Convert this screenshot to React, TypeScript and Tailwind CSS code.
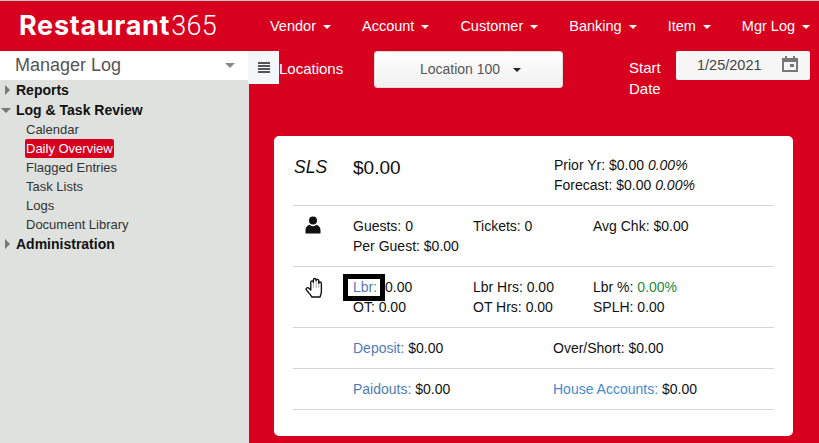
import React from "react";

const navItems = ["Vendor", "Account", "Customer", "Banking", "Item", "Mgr Log"];
const subItems = ["Calendar", "Daily Overview", "Flagged Entries", "Task Lists", "Logs", "Document Library"];

function Caret() {
  return <span className="ml-[7px] inline-block h-0 w-0 border-x-[4px] border-t-[4px] border-x-transparent border-t-white align-middle" />;
}

function TreeHead({ label, open }: { label: string; open?: boolean }) {
  return (
    <div className="flex h-[20px] items-center">
      <span className="flex w-[16px] shrink-0 justify-start pl-[2px]">
        {open ? (
          <span className="-ml-[1px] mt-[1px] h-0 w-0 border-x-[5px] border-t-[5px] border-x-transparent border-t-[#777]" />
        ) : (
          <span className="ml-[3px] h-0 w-0 border-y-[5px] border-l-[5px] border-y-transparent border-l-[#777]" />
        )}
      </span>
      <span className="text-[14px] font-bold text-[#111]">{label}</span>
    </div>
  );
}

function Sidebar() {
  return (
    <aside className="flex w-[249px] shrink-0 flex-col bg-[#dfe1de]">
      <div className="flex h-[29px] items-center justify-between bg-white pl-[15px] pr-[14px]">
        <span className="text-[18px] text-[#555]">Manager Log</span>
        <span className="h-0 w-0 border-x-[5px] border-t-[5px] border-x-transparent border-t-[#888]" />
      </div>
      <div>
        <TreeHead label="Reports" />
        <TreeHead label="Log & Task Review" open />
        <ul className="pl-[26px] text-[13px] leading-[19px] text-[#333]">
          {subItems.map((item) =>
            item === "Daily Overview" ? (
              <li key={item}>
                <span className="-ml-[1px] inline-block h-[19px] rounded-[2px] bg-[#d7001f] px-[1px] text-white">{item}</span>
              </li>
            ) : (
              <li key={item}>{item}</li>
            )
          )}
        </ul>
        <TreeHead label="Administration" />
      </div>
    </aside>
  );
}

function PersonIcon() {
  return (
    <svg width="16" height="18" viewBox="0 0 16 18" fill="#111">
      <circle cx="8" cy="4.5" r="4" />
      <path d="M0.500 17.500v-3.500c0-3 2.500-5 4.500-5 1 .8 2 1.200 3 1.200s2-.4 3-1.200c2 0 4.500 2 4.500 5v3.500z" />
    </svg>
  );
}

function HandIcon() {
  return (
    <svg width="21" height="21" viewBox="0 0 20 20" fill="none" strokeLinejoin="round" strokeLinecap="round">
      <path d="M8 4.500V10M10.600 3.500V10M13.100 4V10" stroke="#aaa" strokeWidth="0.900" />
      <path
        d="M6.500 19c-.6-1.600-1.800-2.700-3-4L1.500 12.500c-1.200-1.500.8-3.200 2.200-1.800L5.500 12.500V5c0-1.700 2.500-1.700 2.500 0V2.800c0-1.800 2.600-1.800 2.600 0v.7c0-1.700 2.500-1.700 2.500 0V6c0-1.600 2.500-1.600 2.500 0v8c0 2-.8 3.200-1.300 5z"
        stroke="#111"
        strokeWidth="1.300"
      />
    </svg>
  );
}

function Row({ icon, height, children }: { icon?: React.ReactNode; height: number; children: React.ReactNode }) {
  return (
    <div className="flex border-b border-[#d4d4d4]" style={{ height }}>
      <div className="flex w-[60px] shrink-0 justify-center pr-[16px] pt-[10px]">{icon}</div>
      <div className="min-w-0 flex-1 pt-[10px] leading-[20px]">{children}</div>
    </div>
  );
}

function Link({ children }: { children: React.ReactNode }) {
  return <span className="text-[#4f7cb8]">{children}</span>;
}

function Card() {
  return (
    <div className="relative ml-[25px] mt-[37px] h-[300px] w-[519px] rounded-[5px] bg-white px-[19px] pt-[1px] text-[14px] text-[#111]">
      <div className="flex h-[69px] border-b border-[#d4d4d4]">
        <div className="w-[60px] shrink-0 pl-[1px] pt-[19px] text-[17.5px] italic leading-[22px]">SLS</div>
        <div className="w-[201px] shrink-0 pt-[18px] text-[19px] leading-[26px]">$0.00</div>
        <div className="pt-[18px] leading-[20px]">
          <div>
            Prior Yr: $0.00 <i>0.00%</i>
          </div>
          <div>
            Forecast: $0.00 <i>0.00%</i>
          </div>
        </div>
      </div>

      <Row icon={<div className="pr-[4px]"><PersonIcon /></div>} height={61}>
        <div className="grid grid-cols-[120px_120px_1fr]">
          <div>Guests: 0</div>
          <div>Tickets: 0</div>
          <div>Avg Chk: $0.00</div>
          <div className="col-span-3">Per Guest: $0.00</div>
        </div>
      </Row>

      <Row icon={<HandIcon />} height={61}>
        <div className="grid grid-cols-[120px_120px_1fr]">
          <div>
            <span className="text-[#5a78c0]">Lbr:</span> <span className="ml-[4px]">0.00</span>
          </div>
          <div>Lbr Hrs: 0.00</div>
          <div>
            Lbr %: <span className="text-[#1f8a3a]">0.00%</span>
          </div>
          <div>OT: 0.00</div>
          <div>OT Hrs: 0.00</div>
          <div>SPLH: 0.00</div>
        </div>
      </Row>

      <Row height={41}>
        <div className="grid grid-cols-[200px_1fr]">
          <div>
            <Link>Deposit:</Link> $0.00
          </div>
          <div>Over/Short: $0.00</div>
        </div>
      </Row>

      <Row height={41}>
        <div className="grid grid-cols-[200px_1fr]">
          <div>
            <Link>Paidouts:</Link> $0.00
          </div>
          <div>
            <span className="text-[#3f8ad0]">House Accounts:</span> $0.00
          </div>
        </div>
      </Row>

      {/* annotation box drawn over the Lbr label */}
      <div className="absolute left-[69px] top-[138px] h-[27px] w-[42px] border-[5px] border-black" />
    </div>
  );
}

export default function App() {
  return (
    <div className="flex h-[443px] w-[819px] flex-col overflow-hidden bg-[#d7001f] font-['Liberation_Sans',Arial,sans-serif]">
      <div className="h-px shrink-0 bg-[#c9c9c9]" />
      <header className="flex h-[50px] shrink-0 items-center text-white">
        <div className="ml-[19px] flex w-[251px] shrink-0 items-baseline whitespace-nowrap text-[27px] leading-none">
          <span className="font-['Inter',sans-serif] font-bold tracking-[0.7px]">Restaurant</span>
          <span className="ml-[1px] font-['Roboto',sans-serif] font-light tracking-[0.3px]">365</span>
        </div>
        <nav className="mt-[1px] flex gap-[31px] text-[14.5px]">
          {navItems.map((item) => (
            <span key={item} className="whitespace-nowrap">
              {item}
              <Caret />
            </span>
          ))}
        </nav>
      </header>

      <div className="flex min-h-0 flex-1">
        <Sidebar />
        <main className="relative min-w-0 flex-1">
          <div className="flex text-[15px] text-white">
            <button className="-ml-px flex h-[33px] w-[31px] shrink-0 items-center justify-center bg-[#f3f7fa]">
              <span className="flex w-[12px] flex-col gap-[1px]">
                <span className="h-[2px] bg-[#555]" />
                <span className="h-[2px] bg-[#555]" />
                <span className="h-[2px] bg-[#555]" />
                <span className="h-[2px] bg-[#555]" />
              </span>
            </button>
            <span className="w-[95px] shrink-0 pt-[8px] leading-[20px]">Locations</span>
            <div className="flex h-[37px] w-[189px] shrink-0 items-center justify-center rounded-[3px] border border-[#ddd] bg-gradient-to-b from-white to-[#f0f0f0] pl-[4px] text-[14px] text-[#555]">
              Location 100
              <span className="ml-[13px] h-0 w-0 border-x-[4px] border-t-[4px] border-x-transparent border-t-[#222]" />
            </div>
            <span className="ml-[66px] w-[47px] shrink-0 pt-[6px] leading-[21px]">
              Start
              <br />
              Date
            </span>
            <div className="flex h-[29px] w-[134px] shrink-0 items-center justify-between rounded-[2px] bg-[#f6f6f6] pl-[21px] pr-[12px] text-[14.5px] text-[#444]">
              1/25/2021
              <svg className="mb-[3px]" width="16" height="16" viewBox="0 0 16 16" fill="none">
                <path d="M3 0h2v2h6V0h2v2h3v14H0V2h3z M2 6v8h12V6z" fill="#777" fillRule="evenodd" />
                <rect x="8" y="8" width="4" height="3" fill="#777" />
              </svg>
            </div>
          </div>
          <Card />
        </main>
      </div>
    </div>
  );
}
